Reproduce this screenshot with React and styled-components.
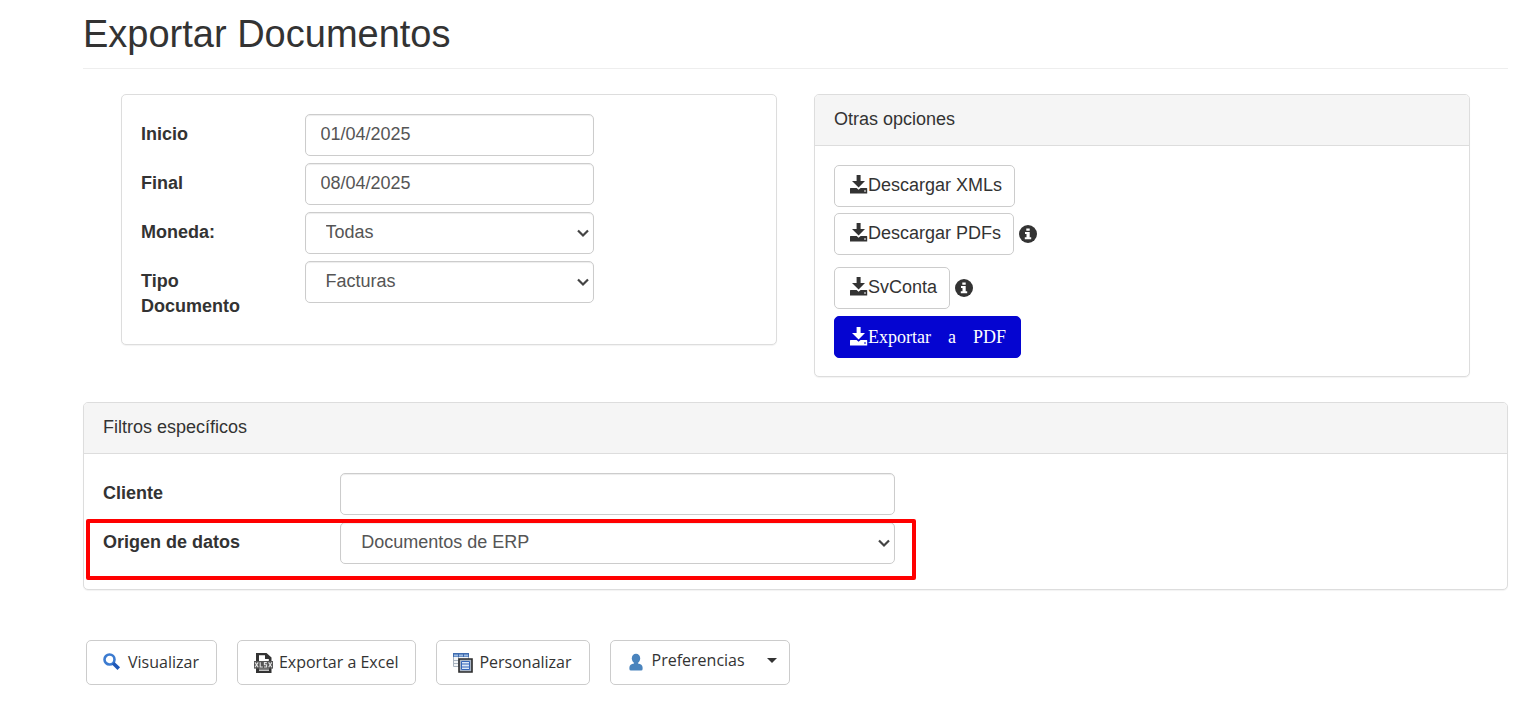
import { useState } from 'react';
import styled, { createGlobalStyle } from 'styled-components';

const GlobalStyle = createGlobalStyle`
    * {
        box-sizing: border-box;
    }

    body {
        margin: 0;
        background: #fff;
        color: #333;
        font-family: "Liberation Sans", Arial, sans-serif;
        font-size: 18px;
        line-height: 25px;
    }
`;

const Page = styled.main`
    padding: 13px 16px 18px 83px;
`;

const Title = styled.h1`
    margin: 0 0 25px;
    padding-bottom: 13px;
    border-bottom: 1px solid #eee;
    font-size: 38px;
    font-weight: 400;
    line-height: 42px;
`;

const Columns = styled.div`
    display: grid;
    grid-template-columns: 1fr 1fr;
    align-items: start;
    gap: 37px;
    padding: 0 38px;
    margin-bottom: 25px;

    @media (max-width: 900px) {
        grid-template-columns: 1fr;
        padding: 0;
    }
`;

const Panel = styled.section`
    border: 1px solid #ddd;
    border-radius: 5px;
    background: #fff;
    box-shadow: 0 1px 1px rgba(0, 0, 0, 0.05);
`;

const PanelHeading = styled.h2`
    margin: 0;
    padding: 12px 19px 13px;
    border-bottom: 1px solid #ddd;
    border-radius: 4px 4px 0 0;
    background: #f5f5f5;
    font-size: 18px;
    font-weight: 400;
    line-height: 25px;
`;

const PanelBody = styled.div`
    padding: 19px 19px 18px;
`;

const Field = styled.div`
    display: grid;
    grid-template-columns: repeat(12, minmax(0, 1fr));
    column-gap: 38px;
    position: relative;
    margin-bottom: 7px;

    @media (max-width: 700px) {
        column-gap: 12px;
    }
`;

const Label = styled.label`
    grid-column: span ${({ $cols }) => $cols};
    padding-top: 8px;
    font-weight: 700;
`;

const Control = styled.div`
    grid-column: span ${({ $cols }) => $cols};
    position: relative;

    & > svg {
        position: absolute;
        top: 17px;
        right: 5px;
        pointer-events: none;
    }
`;

const Input = styled.input`
    display: block;
    width: 100%;
    height: 42px;
    padding: 7px 15px 8px;
    border: 1px solid #ccc;
    border-radius: 5px;
    background: #fff;
    box-shadow: inset 0 1px 1px rgba(0, 0, 0, 0.075);
    color: #555;
    font: inherit;

    &:focus {
        border-color: #66afe9;
        outline: none;
    }
`;

const Select = styled(Input)`
    appearance: none;
    padding: 7px 24px 8px 20px;
`;

const Highlight = styled.div`
    grid-column: 1 / span 7;
    position: absolute;
    inset: -3px -21px -16px -17px;
    border: 4px solid #f00;
    border-radius: 2px;
    pointer-events: none;
`;

const Options = styled.div`
    display: flex;
    flex-direction: column;
    align-items: flex-start;
    gap: 6px;
`;

const OptionRow = styled.div`
    display: flex;
    align-items: center;
    gap: 4px;
    margin-bottom: ${({ $spaced }) => ($spaced ? 6 : 0)}px;
`;

const Button = styled.button`
    display: inline-flex;
    align-items: center;
    height: 42px;
    padding: 0 12px 2px 15px;
    border: 1px solid #ccc;
    border-radius: 5px;
    background: #fff;
    color: #333;
    font: inherit;
    white-space: nowrap;
    cursor: pointer;

    &:hover {
        background: #e6e6e6;
    }
`;

const PdfButton = styled(Button)`
    margin-top: 1px;
    padding: 0 14px 0 15px;
    border-color: #0505d1;
    background: #0505d1;
    color: #fff;
    font-family: "Liberation Serif", "Times New Roman", serif;

    &:hover {
        background: #0404a8;
    }
`;

const Words = styled.span`
    display: flex;
    gap: 17px;
`;

const InfoButton = styled.button`
    display: flex;
    padding: 0;
    border: none;
    background: none;
    color: #333;
    cursor: pointer;
`;

const Actions = styled.div`
    display: flex;
    flex-wrap: wrap;
    gap: 20px;
    margin: 50px 3px 0;
`;

const ActionButton = styled(Button)`
    gap: 6px;
    height: 45px;
    padding: 0 17px 0 16px;
    font-family: "Open Sans", "Segoe UI", sans-serif;
    font-size: 16px;
`;

const MenuButton = styled(ActionButton)`
    padding: 0 12px 4px 15px;
`;

const MenuText = styled.span`
    margin-right: 16px;
`;

const DownloadIcon = () => (
    <svg width="18" height="20" viewBox="0 0 18 20" fill="currentColor" aria-hidden="true">
        <path d="M6.6 0h4v6H15l-6.400 6.600L2 6h4.600z" />
        <path fillRule="evenodd" d="M.6 13h6l2 1.800 2-1.800h6q.6 0 .6.600v4.800H0v-4.800q0-.6.6-.6zM14 15.400v1.200h2v-1.200z" />
    </svg>
);

const InfoIcon = () => (
    <svg width="20" height="20" viewBox="0 0 20 20" aria-hidden="true">
        <circle cx="10" cy="10" r="9" fill="currentColor" />
        <path d="M8.300 4.400h3.400v2.400H8.300zM7 8h4.700v5.200h1.500v2H6.800v-2h1.700V10H7z" fill="#fff" />
    </svg>
);

const ChevronIcon = () => (
    <svg width="12" height="9" viewBox="0 0 12 9" fill="none" stroke="#444" strokeWidth="2.2" aria-hidden="true">
        <path d="M1 1.500l5 5 5-5" />
    </svg>
);

const SearchIcon = () => (
    <svg width="19" height="20" viewBox="0 0 19 20" fill="none" aria-hidden="true">
        <circle cx="6.500" cy="6.500" r="5" stroke="#3c7bd0" strokeWidth="2.600" />
        <path d="M10.200 10.200l5.600 5.400" stroke="#1f58b8" strokeWidth="3.600" />
    </svg>
);

const XlsxIcon = () => (
    <svg width="19" height="20" viewBox="0 0 19 20" aria-hidden="true">
        <path d="M2 0h10.500L17.500 4.600V20H2z" fill="#333" />
        <path d="M5 2.200h6v3.800h3.800v2H5zM5 15.600h10v2.200H5z" fill="#fff" />
        <path d="M5 16.600h10" stroke="#777" />
        <rect y="8" width="19" height="7.600" fill="#555" />
        <path
            d="M1 9.400l3.200 4.800M4.200 9.400L1 14.200M6.200 9.200v4.800h2.600M12.800 9.600h-2.400v2.200h2.200V14H10M14.600 9.400l3.200 4.800M17.800 9.400l-3.200 4.800"
            fill="none"
            stroke="#e4e4e4"
            strokeWidth="1.1"
        />
    </svg>
);

const TableIcon = () => (
    <svg width="20" height="20" viewBox="0 0 20 20" aria-hidden="true">
        <path d="M.5.5h15v13H.5z" fill="#f4f6f8" stroke="#a9b4c0" />
        <path d="M0 0h16v4H0z" fill="#3f6cb0" />
        <path d="M1 2.500h4M6 2.500h4M11 2.500h4" stroke="#9dbbe2" strokeWidth="2" />
        <path d="M0 7.500h6M0 10.500h6M5.500 4v9" stroke="#a9b4c0" />
        <path d="M6 6h13v13H6z" fill="#aab6c6" stroke="#2b2b2b" strokeWidth="1.6" />
        <path d="M8.500 8.500h8v8h-8z" fill="#dce8f8" stroke="#3565b8" />
        <path d="M9 11h7M9 14h7" stroke="#3565b8" strokeWidth="1.2" />
    </svg>
);

const UserIcon = () => (
    <svg width="20" height="20" viewBox="0 0 20 20" fill="#4a84bd" aria-hidden="true">
        <ellipse cx="10" cy="7.500" rx="4.200" ry="4.800" />
        <path d="M8 11.500h4v1c2.800.5 4.600 1.600 4.600 4V18q0 1.500-1.500 1.500H4.900q-1.500 0-1.500-1.500v-1.500c0-2.400 1.800-3.500 4.600-4z" />
    </svg>
);

const CaretIcon = () => (
    <svg width="10" height="5" viewBox="0 0 10 5" fill="#333" aria-hidden="true">
        <path d="M0 0h10L5 5z" />
    </svg>
);

const SelectField = ({ id, label, labelCols, cols, options, highlighted }) => (
    <Field>
        <Label htmlFor={id} $cols={labelCols}>{label}</Label>
        <Control $cols={cols}>
            <Select as="select" id={id}>
                {options.map((option) => (
                    <option key={option}>{option}</option>
                ))}
            </Select>
            <ChevronIcon />
        </Control>
        {highlighted && <Highlight />}
    </Field>
);

const TextField = ({ id, label, labelCols, cols, initial = '' }) => {
    const [value, setValue] = useState(initial);
    return (
        <Field>
            <Label htmlFor={id} $cols={labelCols}>{label}</Label>
            <Control $cols={cols}>
                <Input type="text" id={id} value={value} onChange={(e) => setValue(e.target.value)} />
            </Control>
        </Field>
    );
};

const App = () => (
    <>
        <GlobalStyle />
        <Page>
            <Title>Exportar Documentos</Title>
            <Columns>
                <Panel>
                    <PanelBody>
                        <TextField id="inicio" label="Inicio" labelCols={3} cols={6} initial="01/04/2025" />
                        <TextField id="final" label="Final" labelCols={3} cols={6} initial="08/04/2025" />
                        <SelectField id="moneda" label="Moneda:" labelCols={3} cols={6} options={['Todas']} />
                        <SelectField id="tipo" label="Tipo Documento" labelCols={3} cols={6} options={['Facturas']} />
                    </PanelBody>
                </Panel>
                <Panel>
                    <PanelHeading>Otras opciones</PanelHeading>
                    <PanelBody>
                        <Options>
                            <Button type="button"><DownloadIcon />Descargar XMLs</Button>
                            <OptionRow $spaced>
                                <Button type="button"><DownloadIcon />Descargar PDFs</Button>
                                <InfoButton type="button"><InfoIcon /></InfoButton>
                            </OptionRow>
                            <OptionRow>
                                <Button type="button"><DownloadIcon />SvConta</Button>
                                <InfoButton type="button"><InfoIcon /></InfoButton>
                            </OptionRow>
                            <PdfButton type="button">
                                <DownloadIcon />
                                <Words><span>Exportar</span> <span>a</span> <span>PDF</span></Words>
                            </PdfButton>
                        </Options>
                    </PanelBody>
                </Panel>
            </Columns>
            <Panel>
                <PanelHeading>Filtros específicos</PanelHeading>
                <PanelBody>
                    <TextField id="cliente" label="Cliente" labelCols={2} cols={5} />
                    <SelectField
                        id="origen"
                        label="Origen de datos"
                        labelCols={2}
                        cols={5}
                        options={['Documentos de ERP']}
                        highlighted
                    />
                </PanelBody>
            </Panel>
            <Actions>
                <ActionButton type="button"><SearchIcon />Visualizar</ActionButton>
                <ActionButton type="button"><XlsxIcon />Exportar a Excel</ActionButton>
                <ActionButton type="button"><TableIcon />Personalizar</ActionButton>
                <MenuButton type="button" aria-haspopup="menu">
                    <UserIcon />
                    <MenuText>Preferencias</MenuText>
                    <CaretIcon />
                </MenuButton>
            </Actions>
        </Page>
    </>
);

export default App;
